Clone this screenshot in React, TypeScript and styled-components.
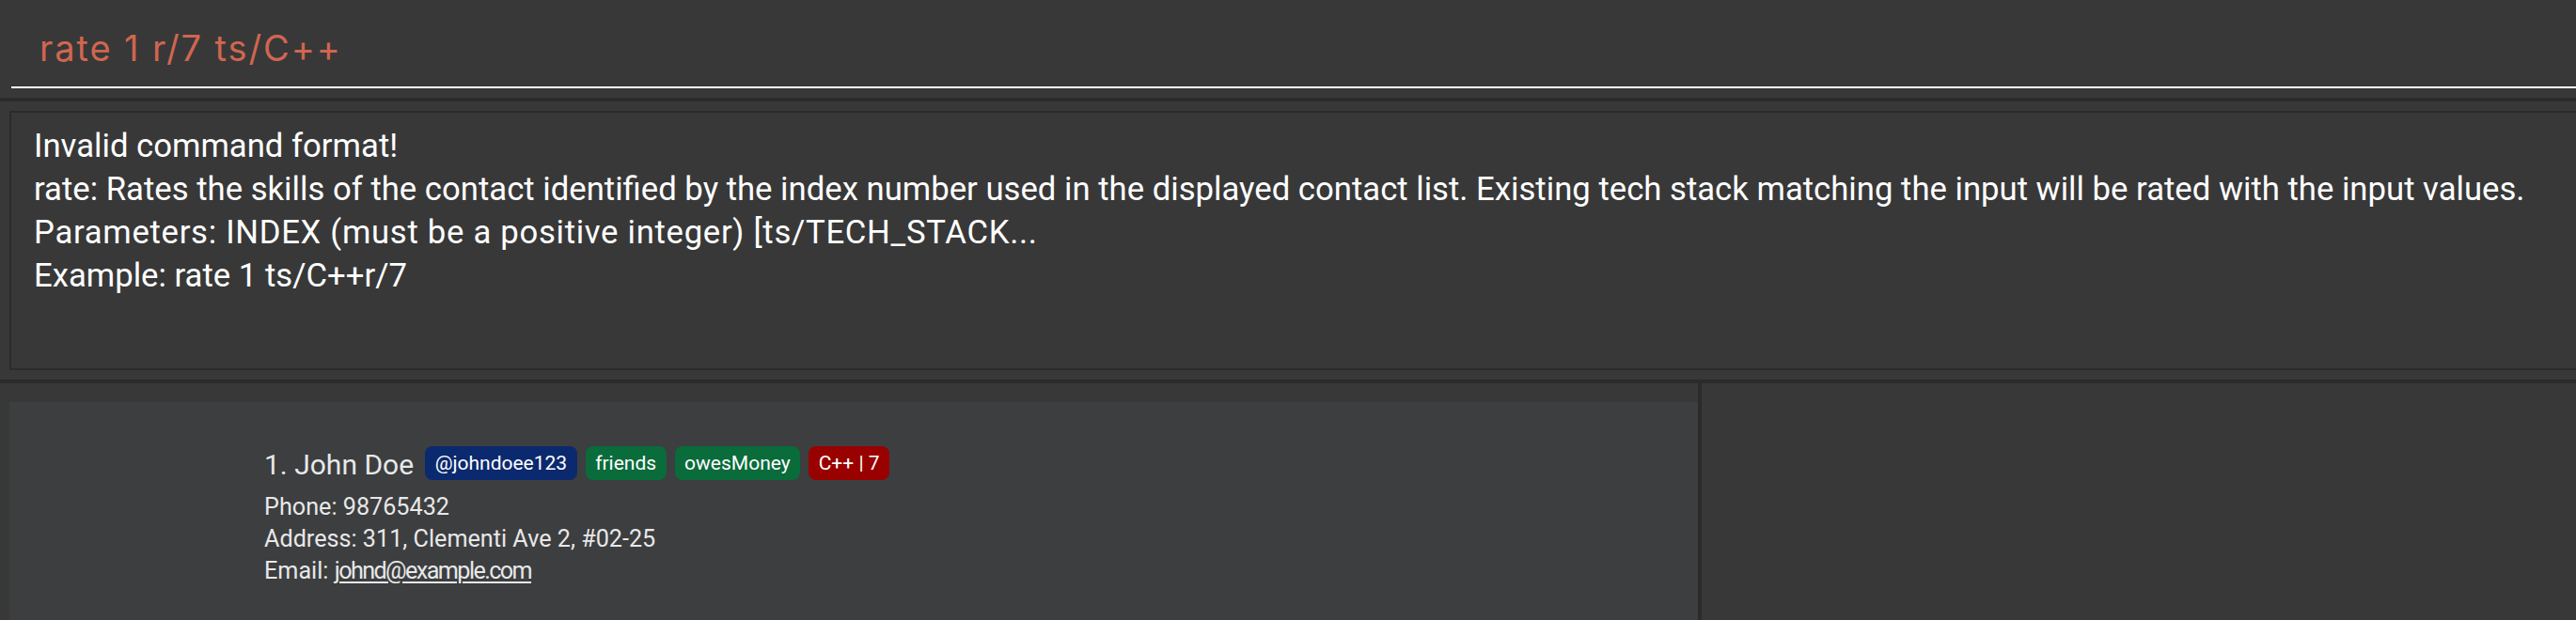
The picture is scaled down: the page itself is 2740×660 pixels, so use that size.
import React from 'react';
import styled, { createGlobalStyle } from 'styled-components';

const GlobalStyle = createGlobalStyle`
  html, body {
    margin: 0;
    padding: 0;
    background: #383838;
  }
  body {
    font-family: Roboto, "Liberation Sans", sans-serif;
  }
`;

const Window = styled.div`
  width: 2740px;
  height: 660px;
  overflow: hidden;
  display: flex;
  flex-direction: column;
  background: #383838;
`;

const CommandSection = styled.div`
  height: 104px;
  flex: none;
  padding-left: 12px;
  box-sizing: border-box;
`;

const CommandField = styled.div`
  height: 94px;
  box-sizing: border-box;
  border-bottom: 2px solid #ffffff;
  padding: 28px 0 0 30px;
  font-family: Inter, Roboto, sans-serif;
  font-size: 38px;
  line-height: 46px;
  letter-spacing: 1.9px;
  color: #d06651;
  white-space: pre;
`;

const SplitBar = styled.div<{ $vertical?: boolean }>`
  flex: none;
  background: #2b2b2b;
  ${(p) => (p.$vertical ? 'width: 4px; align-self: stretch;' : 'height: 4px;')}
`;

const ResultSection = styled.div`
  height: 296px;
  flex: none;
  box-sizing: border-box;
  padding: 10px 0 10px 10px;
`;

const ResultBox = styled.div`
  height: 100%;
  box-sizing: border-box;
  border: 2px solid #2b2b2b;
  border-right: none;
  padding: 12px 0 0 24px;
  color: #ffffff;
  font-size: 34.7px;
  line-height: 46px;
`;

const ResultLine = styled.div<{ $spacing?: number }>`
  white-space: pre;
  letter-spacing: ${(p) => p.$spacing ?? 0}px;
`;

const ListArea = styled.div`
  flex: 1;
  display: flex;
  min-height: 0;
`;

const ListPane = styled.div`
  width: 1806px;
  flex: none;
  box-sizing: border-box;
  padding: 20px 0 0 10px;
  overflow: hidden;
`;

const DetailPane = styled.div`
  flex: 1;
  background: #383838;
`;

const Card = styled.div`
  background: #3c3e40;
  min-height: 300px;
  box-sizing: border-box;
  padding: 47px 0 0 271px;
`;

const TitleRow = styled.div`
  display: flex;
  align-items: flex-start;
  gap: 9px;
`;

const Name = styled.span`
  font-size: 30px;
  line-height: 36px;
  margin-top: 2px;
  margin-right: 3px;
  color: #e8e8e8;
  white-space: pre;
`;

const Tag = styled.span<{ $bg: string }>`
  display: inline-flex;
  align-items: center;
  height: 36px;
  padding: 0 10.5px;
  border-radius: 8px;
  background: ${(p) => p.$bg};
  color: #ffffff;
  font-size: 21px;
  white-space: pre;
`;

const Details = styled.div`
  margin-top: 10px;
  font-size: 25.2px;
  line-height: 34px;
  color: #e8e8e8;
`;

const DetailLine = styled.div`
  white-space: pre;
`;

const Link = styled.span`
  text-decoration: underline;
  text-underline-offset: 3px;
  text-decoration-thickness: 1.5px;
  letter-spacing: -1.6px;
`;

const resultLines: { text: string; spacing?: number }[] = [
  { text: 'Invalid command format!' },
  {
    text: 'rate: Rates the skills of the contact identified by the index number used in the displayed contact list. Existing tech stack matching the input will be rated with the input values.',
  },
  { text: 'Parameters: INDEX (must be a positive integer) [ts/TECH_STACK...', spacing: 0.7 },
  { text: 'Example: rate 1 ts/C++r/7' },
];

const tags = [
  { label: '@johndoee123', bg: '#0b296e' },
  { label: 'friends', bg: '#0a6b3b' },
  { label: 'owesMoney', bg: '#0a6b3b' },
  { label: 'C++ | 7', bg: '#990000' },
];

export default function App() {
  return (
    <>
      <GlobalStyle />
      <Window>
        <CommandSection>
          <CommandField>rate 1 r/7 ts/C++</CommandField>
        </CommandSection>
        <SplitBar />
        <ResultSection>
          <ResultBox>
            {resultLines.map((l) => (
              <ResultLine key={l.text} $spacing={l.spacing}>
                {l.text}
              </ResultLine>
            ))}
          </ResultBox>
        </ResultSection>
        <SplitBar />
        <ListArea>
          <ListPane>
            <Card>
              <TitleRow>
                <Name>1. John Doe</Name>
                {tags.map((t) => (
                  <Tag key={t.label} $bg={t.bg}>
                    {t.label}
                  </Tag>
                ))}
              </TitleRow>
              <Details>
                <DetailLine>Phone: 98765432</DetailLine>
                <DetailLine>Address: 311, Clementi Ave 2, #02-25</DetailLine>
                <DetailLine>
                  Email: <Link>johnd@example.com</Link>
                </DetailLine>
              </Details>
            </Card>
          </ListPane>
          <SplitBar $vertical />
          <DetailPane />
        </ListArea>
      </Window>
    </>
  );
}
